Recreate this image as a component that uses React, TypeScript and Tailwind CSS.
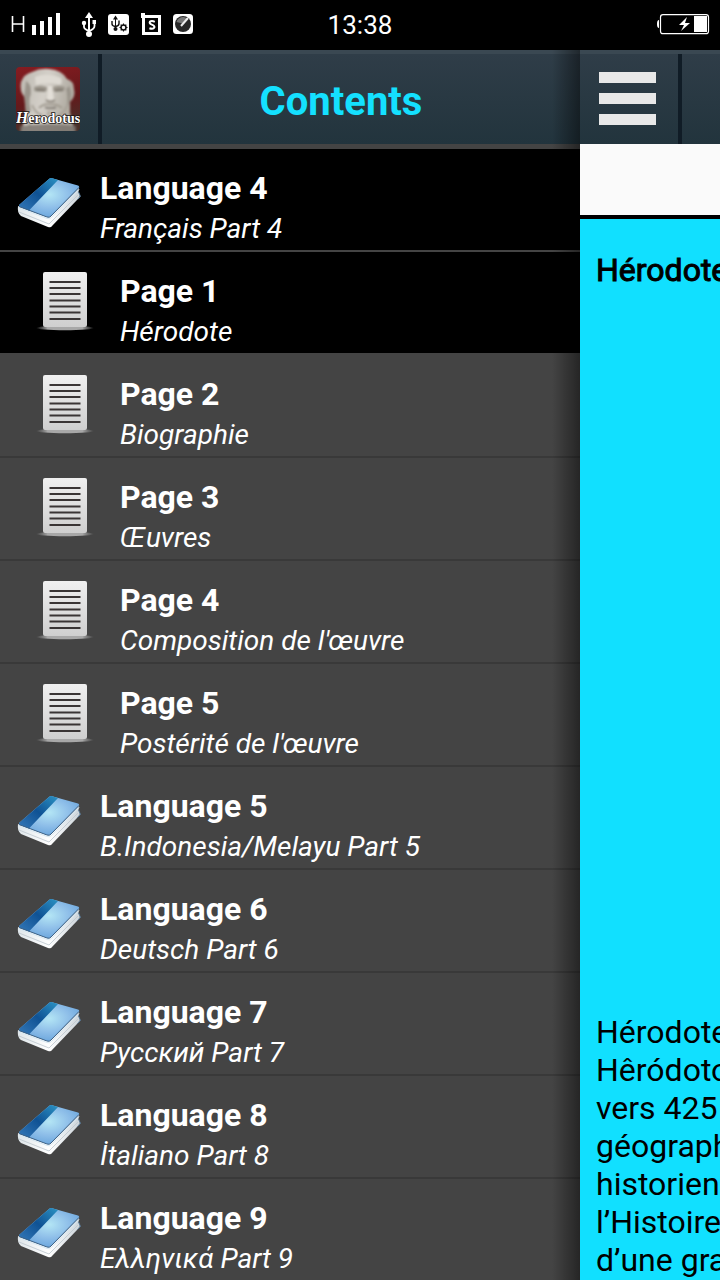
import React from "react";

type Entry = { kind: "language" | "page"; title: string; subtitle: string; active?: boolean };

const entries: Entry[] = [
  { kind: "language", title: "Language 4", subtitle: "Français Part 4", active: true },
  { kind: "page", title: "Page 1", subtitle: "Hérodote", active: true },
  { kind: "page", title: "Page 2", subtitle: "Biographie" },
  { kind: "page", title: "Page 3", subtitle: "Œuvres" },
  { kind: "page", title: "Page 4", subtitle: "Composition de l'œuvre" },
  { kind: "page", title: "Page 5", subtitle: "Postérité de l'œuvre" },
  { kind: "language", title: "Language 5", subtitle: "B.Indonesia/Melayu Part 5" },
  { kind: "language", title: "Language 6", subtitle: "Deutsch Part 6" },
  { kind: "language", title: "Language 7", subtitle: "Русский Part 7" },
  { kind: "language", title: "Language 8", subtitle: "İtaliano Part 8" },
  { kind: "language", title: "Language 9", subtitle: "Ελληνικά Part 9" },
];

const paragraph = ["Hérodote", "Hêródotos", "vers 425", "géographe", "historien", "l’Histoire", "d’une grande"];

function Gradients() {
  return (
    <svg width="0" height="0" className="absolute" aria-hidden="true">
      <defs>
        <radialGradient id="cover" cx="0.5" cy="0.42" r="0.6">
          <stop offset="0" stopColor="#b4e6f5" />
          <stop offset="0.55" stopColor="#8fbfe9" />
          <stop offset="1" stopColor="#6ba6dd" />
        </radialGradient>
        <linearGradient id="spine" x1="1" y1="0" x2="0" y2="1">
          <stop offset="0" stopColor="#2c93c4" />
          <stop offset="0.5" stopColor="#0f5294" />
          <stop offset="1" stopColor="#3478b8" />
        </linearGradient>
        <linearGradient id="leaves" x1="0" y1="0" x2="1" y2="0">
          <stop offset="0" stopColor="#dfe6ea" />
          <stop offset="0.5" stopColor="#ffffff" />
          <stop offset="1" stopColor="#ccd4da" />
        </linearGradient>
        <linearGradient id="sheet" x1="0" y1="0" x2="0" y2="1">
          <stop offset="0" stopColor="#f0f0f0" />
          <stop offset="1" stopColor="#cfcfcf" />
        </linearGradient>
        <linearGradient id="ledge" x1="0" y1="0" x2="1" y2="0">
          <stop offset="0" stopColor="#888888" stopOpacity="0" />
          <stop offset="0.2" stopColor="#a8a8a8" />
          <stop offset="0.8" stopColor="#a8a8a8" />
          <stop offset="1" stopColor="#888888" stopOpacity="0" />
        </linearGradient>
      </defs>
    </svg>
  );
}

function BookIcon() {
  return (
    <svg width="64" height="52" viewBox="0 0 64 52" aria-hidden="true">
      <path d="M1 29 L33 40 L62 10 L61.500 15 L63 19 L60 23 L35 49 Q34 51 31 50 L4 39 Q0 36 1 29Z" fill="url(#leaves)" />
      <path d="M2 35 L32 47 L61 18" stroke="#bcc6ce" strokeWidth="0.8" fill="none" />
      <path d="M61.500 15 L63.500 19.500 L60.500 22.500" stroke="#5d7f9d" strokeWidth="1" fill="none" />
      <path d="M2 28 L32 2 Q33.500 .500 36 1.500 L61 8.500 Q63 9.500 61.500 11 L34 39 Q32.500 41 30 40 L3 30Z" fill="url(#cover)" />
      <path d="M2 28 L32 2 Q33.500 .500 36 1.500 L41 3 L12 33.500 L3 30Z" fill="url(#spine)" />
      <path d="M2 29.500 L30 40 Q32.500 41 34 39 L62 10.500" fill="none" stroke="#3b6186" strokeWidth="1" />
      <path d="M2 31 L30 41.500 Q32.500 42.500 34.500 40.500 L62 12.500" fill="none" stroke="#d9e9f2" strokeWidth="1" />
    </svg>
  );
}

function PageIcon() {
  return (
    <svg width="60" height="60" viewBox="0 0 60 60" aria-hidden="true">
      <ellipse cx="30" cy="56" rx="29" ry="2.200" fill="url(#ledge)" />
      <rect x="8" y="0" width="44" height="55" rx="2" fill="url(#sheet)" />
      <path d="M14.500 10h31M14.500 16h31M14.500 22h31M14.500 28.500h31M14.500 34.500h31M14.500 40.500h31M14.500 47h31" stroke="#3a3535" strokeWidth="1.800" />
    </svg>
  );
}

function PortraitIcon() {
  return (
    <svg width="64" height="64" viewBox="0 0 64 64" role="img" aria-label="Herodotus">
      <defs>
        <linearGradient id="backdrop" x1="0" y1="0" x2="0.2" y2="1">
          <stop offset="0" stopColor="#861c21" />
          <stop offset="0.6" stopColor="#64191b" />
          <stop offset="1" stopColor="#4a3029" />
        </linearGradient>
        <linearGradient id="marble" x1="0" y1="0" x2="1" y2="0.3">
          <stop offset="0" stopColor="#bdb9b1" />
          <stop offset="0.5" stopColor="#d3cfc8" />
          <stop offset="1" stopColor="#aea99f" />
        </linearGradient>
        <clipPath id="rounded">
          <rect width="64" height="64" rx="4" />
        </clipPath>
        <filter id="soften">
          <feGaussianBlur stdDeviation="0.9" />
        </filter>
      </defs>
      <g clipPath="url(#rounded)">
        <rect width="64" height="64" fill="url(#backdrop)" />
        <g filter="url(#soften)">
          <path d="M5 15 Q8 7 16 5 Q24 1 33 2 Q46 3 51 12 Q58 14 58 22 Q60 30 54 35 L54 46 L59 66 H5 L10 46 L9 31 Q3 24 5 15Z" fill="url(#marble)" />
          <path d="M19 10 Q32 5 45 11 Q47 16 44 18 Q32 14 20 18Z" fill="#dedad3" />
          <path d="M10 14 Q16 17 15 27 Q12 34 15 44 L10 46 L8 29Z M53 19 Q56 24 54 35 L51 41 Q52 28 50 22Z" fill="#9a948b" />
          <path d="M18 20 Q24 17 31 20 L31 24 Q25 26 18 24Z M37 20 Q43 17 49 20 L48 24 Q42 26 37 24Z" fill="#9c968c" />
          <path d="M20 23 Q25 22 29 24 M39 24 Q43 22 47 23" fill="none" stroke="#767067" strokeWidth="1.500" />
          <path d="M32 19 L36 19 L38 33 L31 33Z" fill="#e3dfd8" />
          <path d="M30 33 Q34 36 39 33" fill="none" stroke="#837c72" strokeWidth="1.600" />
          <path d="M23 41 Q28 36 34 37.500 Q40 36 46 41" fill="none" stroke="#a29c92" strokeWidth="2" />
          <path d="M29 40.500 Q34 42 40 40.500" fill="none" stroke="#6d665e" strokeWidth="1.600" />
          <path d="M16 38 Q20 47 26 48 M51 39 Q48 46 42 48 M33 44 L32 49 M12 50 L14 60 M54 50 L51 60" fill="none" stroke="#a9a399" strokeWidth="2" />
          <path d="M4 59 Q32 55 60 59 V66 H4Z" fill="#77706a" opacity="0.8" />
        </g>
        <text x="32" y="56" textAnchor="middle" fontFamily="Liberation Serif, serif" fontWeight="700" fontSize="14" fill="#ffffff" stroke="#1a1412" strokeWidth="1.500" paintOrder="stroke">
          <tspan fontStyle="italic" fontSize="16">H</tspan>erodotus
        </text>
      </g>
    </svg>
  );
}

function StatusIcons() {
  return (
    <svg width="186" height="28" viewBox="10 11 186 28" aria-hidden="true">
      <g fill="none" stroke="#fff" strokeWidth="1.600">
        <path d="M12.500 16v16M23.500 16v16M12.500 24h11" />
      </g>
      <path d="M32 25h4v10h-4zM40 21h4v14h-4zM48 17h4v18h-4zM56 13h4v22h-4z" fill="#fff" />
      <g fill="#fff" stroke="none">
        <path d="M89 12l4 6h-3v17h-2V18h-3z" />
        <circle cx="89" cy="34" r="3" />
        <circle cx="84" cy="23" r="2.200" />
        <path d="M92.500 20h3.500v4h-3.500z" />
        <path d="M84 24v3q0 2 5 4q5.500-2 5.500-5v-3" fill="none" stroke="#fff" strokeWidth="1.800" />
      </g>
      <rect x="108" y="14" width="21" height="21" rx="3" fill="#fff" />
      <path d="M115.500 15.500l2.500 4h-2v10h-1v-10h-2z" fill="#111" />
      <path d="M112 21v3q0 2 3.500 2.500q3.500-.500 3.500-3v-3" fill="none" stroke="#111" strokeWidth="1.400" />
      <circle cx="115.500" cy="29" r="2" fill="#111" />
      <circle cx="123.500" cy="27.500" r="2.500" fill="none" stroke="#111" strokeWidth="1.500" />
      <path d="M123.500 23.500v8M119.500 27.500h8M120.700 24.700l1.300 1.300M125 29l1.300 1.300M126.300 24.700l-1.300 1.300M122 29l-1.300 1.300" stroke="#111" strokeWidth="1.100" strokeDasharray="1.800 4.400" />
      <path d="M141 13h4v2h16v20h-19V18h-1z" fill="#fff" />
      <rect x="145" y="18" width="13" height="14" fill="#050505" />
      <path d="M154.800 21.800q-3-1.500-4.800-.2q-1.200 2 1.800 3t2.600 2.800q-1 2.200-5 .8" fill="none" stroke="#fff" strokeWidth="2" />
      <rect x="173" y="14" width="20" height="20" rx="3.500" fill="#fff" />
      <circle cx="183" cy="24" r="8" fill="#282828" />
      <path d="M176.500 22a7 7 0 0 1 11-3.500l-5 5z" fill="#777" />
      <path d="M181 26l7-8" stroke="#eee" strokeWidth="2" />
    </svg>
  );
}

function BatteryIcon() {
  return (
    <svg width="54" height="22" viewBox="655 14 54 22" role="img" aria-label="Battery charging">
      <path d="M658 20q-2 0-2 4t2 4z" fill="#fff" />
      <rect x="659.500" y="14.700" width="48" height="19" rx="2.500" fill="none" stroke="#fff" strokeWidth="1.200" />
      <rect x="693" y="16" width="13" height="16" fill="#fff" />
      <path d="M686 17l-8 8h5l-3 6 9-8h-5z" fill="#fff" />
    </svg>
  );
}

export default function App() {
  return (
    <div className="flex h-screen flex-col overflow-hidden bg-black font-['Roboto',sans-serif]">
      <Gradients />
      <header className="grid h-[50px] shrink-0 grid-cols-3 items-center px-2.5 text-white">
        <StatusIcons />
        <time className="text-center text-[26px] leading-8">13:38</time>
        <div className="flex justify-end">
          <BatteryIcon />
        </div>
      </header>

      <div className="flex min-h-0 flex-1">
        <nav aria-label="Contents" className="relative min-w-0 flex-1 overflow-hidden bg-[#444444]">
          <div className="flex h-[94px] border-t-4 border-[#3a4852] bg-linear-to-b from-[#2f3d48] to-[#22343d]">
            <button type="button" className="flex w-[98px] shrink-0 items-center pl-4" aria-label="Herodotus">
              <PortraitIcon />
            </button>
            <div className="w-1 shrink-0 bg-[#101c26]" />
            <h1 className="flex flex-1 items-center justify-center pt-1.5 text-[40px] leading-[48px] font-bold text-[#14e0ff]">Contents</h1>
          </div>
          <ul className="border-t-[5px] border-[#444444]">
            {entries.map((entry) => (
              <li
                key={entry.title}
                className={entry.active ? "border-b-2 border-[#444444] bg-black" : "border-b-2 border-[#393939]"}
              >
                <a href="#" className="flex h-[101px] items-start text-white">
                  {entry.kind === "language" ? (
                    <span className="w-[100px] shrink-0 pt-7 pl-[17px]">
                      <BookIcon />
                    </span>
                  ) : (
                    <span className="w-[120px] shrink-0 pt-5 pl-[35px]">
                      <PageIcon />
                    </span>
                  )}
                  <span className="flex flex-col gap-[5px] pt-[19px] whitespace-nowrap">
                    <span className="text-[32px] leading-10 font-bold">{entry.title}</span>
                    <span className="text-[28px] leading-8 italic">{entry.subtitle}</span>
                  </span>
                </a>
              </li>
            ))}
          </ul>
          <div className="pointer-events-none absolute inset-y-0 right-0 w-7 bg-linear-to-r from-transparent to-black/45" />
        </nav>

        <main className="flex w-[140px] shrink-0 flex-col overflow-hidden">
          <div className="flex h-[94px] shrink-0 border-t-4 border-[#3a4852] bg-linear-to-b from-[#2f3d48] to-[#22343d]">
            <button type="button" aria-label="Menu" className="flex w-[98px] shrink-0 flex-col gap-2.5 pt-[18px] pl-[19px]">
              <span className="h-[11px] w-[57px] bg-[#e8e8e8]" />
              <span className="h-[11px] w-[57px] bg-[#e8e8e8]" />
              <span className="h-[11px] w-[57px] bg-[#e8e8e8]" />
            </button>
            <div className="w-1 shrink-0 bg-[#101c26]" />
          </div>
          <div className="h-[75px] shrink-0 border-b-4 border-black bg-[#fafafa]" />
          <article className="flex-1 bg-[#11e0ff] pt-8 pl-4 text-[32px] leading-[38px] whitespace-nowrap text-black">
            <h2 className="[-webkit-text-stroke:1px_black]">Hérodote</h2>
            <p className="pt-[724px]">
              {paragraph.map((line) => (
                <span key={line} className="block">
                  {line}
                </span>
              ))}
            </p>
          </article>
        </main>
      </div>
    </div>
  );
}
